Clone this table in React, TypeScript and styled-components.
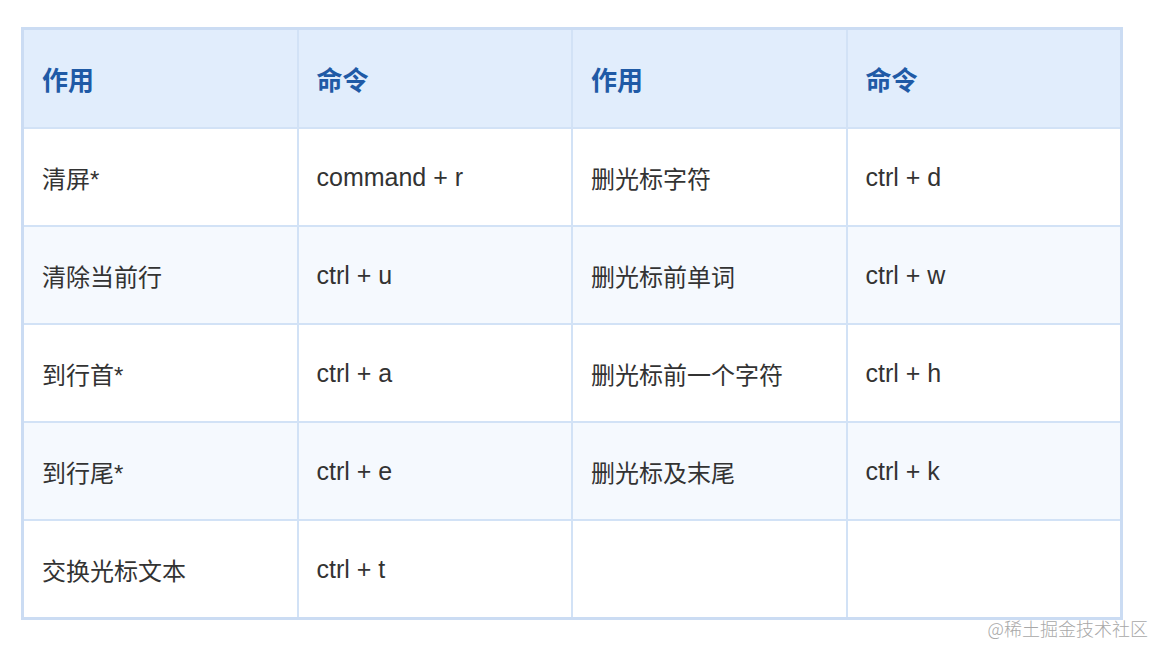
import React from "react";
import styled, { createGlobalStyle } from "styled-components";

const GlobalStyle = createGlobalStyle`
  html, body { margin: 0; padding: 0; background: #ffffff; }
  body { font-family: "Liberation Sans", "Noto Sans CJK SC", sans-serif; }
`;

const Page = styled.div`
  position: relative;
  width: 1154px;
  height: 646px;
  padding: 27px 0 0 21px;
  box-sizing: border-box;
`;

const Grid = styled.div`
  display: grid;
  grid-template-columns: repeat(4, 1fr);
  grid-template-rows: 97px repeat(5, 96px);
  gap: 2px;
  width: 1102px;
  box-sizing: border-box;
  border: 3px solid #cbdcf3;
  background: #d2e2f6;
`;

const Cell = styled.div<{ $variant: "head" | "odd" | "even"; $code?: boolean }>`
  display: flex;
  align-items: center;
  padding: 0 18px;
  font-size: ${(p) => (p.$variant === "head" ? "26px" : p.$code ? "25px" : "24px")};
  font-family: "Liberation Sans", "Noto Sans CJK SC", sans-serif;
  background: ${(p) =>
    p.$variant === "head" ? "#e1edfc" : p.$variant === "even" ? "#f5f9fe" : "#ffffff"};
  color: ${(p) => (p.$variant === "head" ? "#1f5aa6" : "#333333")};
  font-weight: ${(p) => (p.$variant === "head" ? 700 : 400)};
`;

const Watermark = styled.div`
  position: absolute;
  right: 6px;
  bottom: 5px;
  font-size: 18px;
  font-family: "Noto Sans CJK SC", sans-serif;
  font-weight: 300;
  color: #a8a8a8;
  letter-spacing: 0;
`;

const header = ["作用", "命令", "作用", "命令"];
const rows = [
  ["清屏*", "command + r", "删光标字符", "ctrl + d"],
  ["清除当前行", "ctrl + u", "删光标前单词", "ctrl + w"],
  ["到行首*", "ctrl + a", "删光标前一个字符", "ctrl + h"],
  ["到行尾*", "ctrl + e", "删光标及末尾", "ctrl + k"],
  ["交换光标文本", "ctrl + t", "", ""],
];

export default function App() {
  return (
    <>
      <GlobalStyle />
      <Page>
        <Grid>
          {header.map((h, i) => (
            <Cell key={"h" + i} $variant="head">
              {h}
            </Cell>
          ))}
          {rows.map((r, ri) =>
            r.map((c, ci) => (
              <Cell
                key={ri + "-" + ci}
                $variant={ri % 2 === 1 ? "even" : "odd"}
                $code={ci % 2 === 1}
              >
                {c}
              </Cell>
            ))
          )}
        </Grid>
        <Watermark>@稀土掘金技术社区</Watermark>
      </Page>
    </>
  );
}
